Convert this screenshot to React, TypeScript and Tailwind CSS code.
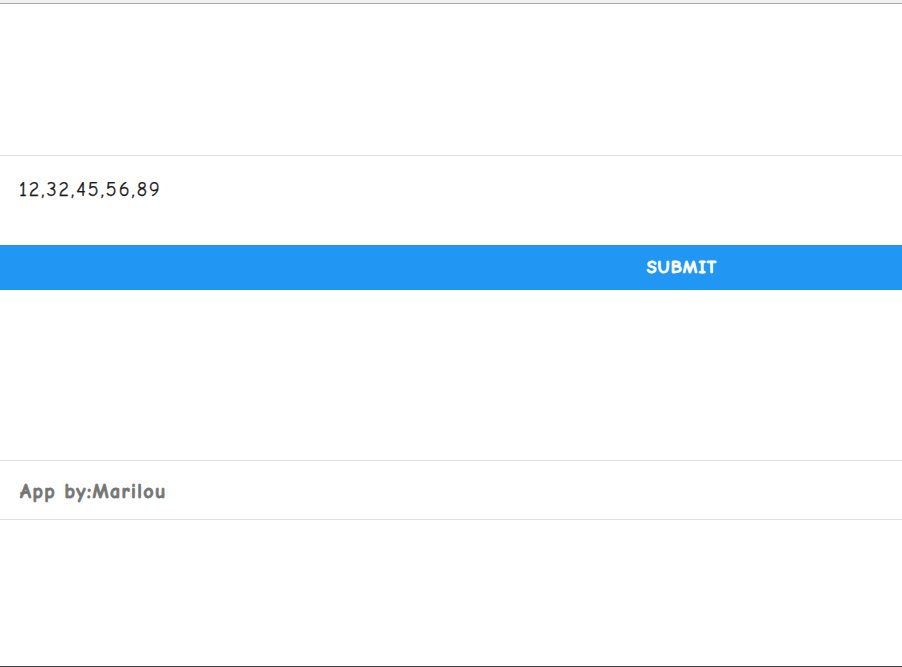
import React from "react";

const font = "font-['Comic_Sans_MS','Comic_Neue','Open_Sans',sans-serif]";

export default function App() {
  return (
    <div className={`flex h-[667px] w-full flex-col overflow-hidden bg-white ${font}`}>
      {/* top chrome strip */}
      <div className="h-[3px] shrink-0 bg-[#f0f0f0]" />
      <div className="h-px shrink-0 bg-[#a9a9a9]" />

      <div className="h-[151px] shrink-0" />

      {/* input row */}
      <div className="h-[90px] shrink-0 border-t border-[#e0e0e0] px-[19px] pt-[21px]">
        <input
          defaultValue="12,32,45,56,89"
          className="w-full bg-transparent text-[20px] leading-[26px] tracking-[1.95px] text-[#1a1a1a] outline-none [-webkit-text-stroke:0.25px_#1a1a1a]"
        />
      </div>

      <button className="flex h-[45px] w-full shrink-0 items-center justify-center bg-[#2196f3] pl-[462px] text-[18px] font-black tracking-[1.1px] text-white [-webkit-text-stroke:0.8px_white]">
        SUBMIT
      </button>

      <div className="h-[170px] shrink-0" />

      {/* footer */}
      <div className="flex h-[60px] shrink-0 items-center border-y border-[#e0e0e0] px-[20px] pt-[3px]">
        <span className="text-[20px] font-black tracking-[1.4px] text-[#757575] [-webkit-text-stroke:0.8px_#757575]">
          App by:Marilou
        </span>
      </div>

      <div className="flex-1" />
      <div className="h-px shrink-0 bg-[#3a4147]" />
    </div>
  );
}
